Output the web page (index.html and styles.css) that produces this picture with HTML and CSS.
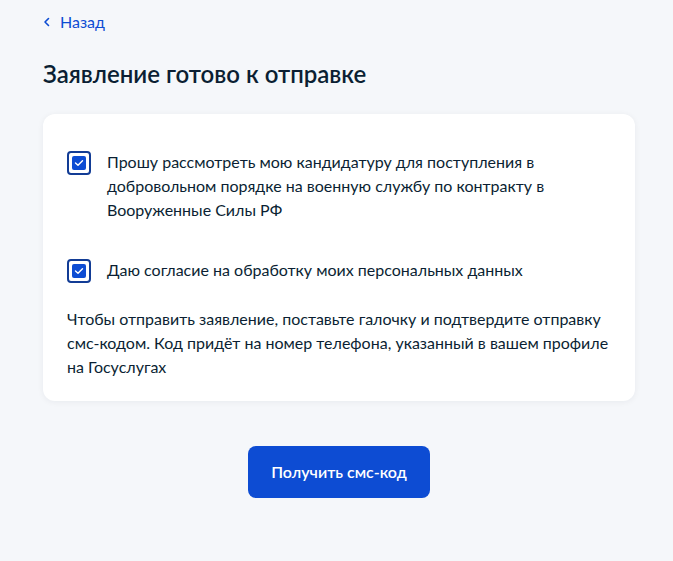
FILE: index.html
```html
<!DOCTYPE html>
<html lang="ru">
<head>
<meta charset="utf-8">
<title>Заявление готово к отправке</title>
<link rel="stylesheet" href="styles.css">
</head>
<body>
<main class="page">
  <a class="back" href="#">
    <svg class="back-icon" width="8" height="10" viewBox="0 0 8 10" aria-hidden="true">
      <path d="M5.5 1.5 L2 5 L5.5 8.5" fill="none" stroke="currentColor" stroke-width="1.6" stroke-linecap="round" stroke-linejoin="round"/>
    </svg>
    <span>Назад</span>
  </a>

  <h1 class="title">Заявление готово к отправке</h1>

  <section class="card">
    <label class="check">
      <span class="box"><span class="box-fill">
        <svg width="10" height="8" viewBox="0 0 10 8" aria-hidden="true"><path d="M1.5 4 L4 6.3 L8.5 1.7" fill="none" stroke="#fff" stroke-width="1.4" stroke-linecap="round" stroke-linejoin="round"/></svg>
      </span></span>
      <span class="check-text">Прошу рассмотреть мою кандидатуру для поступления в добровольном порядке на военную службу по контракту в Вооруженные Силы РФ</span>
    </label>

    <label class="check">
      <span class="box"><span class="box-fill">
        <svg width="10" height="8" viewBox="0 0 10 8" aria-hidden="true"><path d="M1.5 4 L4 6.3 L8.5 1.7" fill="none" stroke="#fff" stroke-width="1.4" stroke-linecap="round" stroke-linejoin="round"/></svg>
      </span></span>
      <span class="check-text">Даю согласие на обработку моих персональных данных</span>
    </label>

    <p class="note">Чтобы отправить заявление, поставьте галочку и подтвердите отправку смс-кодом. Код придёт на номер телефона, указанный в вашем профиле на Госуслугах</p>
  </section>

  <div class="actions">
    <button class="btn" type="button">Получить смс-код</button>
  </div>
</main>
</body>
</html>
```

FILE: styles.css
```css
* { box-sizing: border-box; }

html, body {
  margin: 0;
  background: #f5f7fa;
}

body {
  font-family: Lato, "Noto Sans", "Liberation Sans", sans-serif;
  color: #0b1f33;
  font-size: 16px;
  line-height: 24px;
}

.page {
  width: 592px;
  margin-left: 43px;
  padding-top: 9px;
  padding-bottom: 40px;
}

.back {
  display: inline-flex;
  align-items: center;
  gap: 9px;
  color: #0d4cd3;
  text-decoration: none;
  font-size: 16px;
  line-height: 24px;
}

.back-icon { display: block; margin-top: 1px; }

.title {
  margin: 24px 0 24px;
  font-size: 24px;
  line-height: 32px;
  font-weight: 600;
  letter-spacing: 0;
}

.card {
  background: #fff;
  border-radius: 12px;
  box-shadow: 0 1px 6px rgba(11, 31, 51, 0.06);
  padding: 36px 24px 22px;
  display: flex;
  flex-direction: column;
  gap: 36px;
}

.check {
  display: flex;
  align-items: flex-start;
  gap: 16px;
}

.check + .note { margin-top: -12px; }

.box {
  flex: none;
  width: 24px;
  height: 24px;
  margin-top: 1px;
  border: 2px solid #123c95;
  border-radius: 4px;
  background: #fff;
  padding: 3px;
}

.box-fill {
  display: flex;
  align-items: center;
  justify-content: center;
  width: 100%;
  height: 100%;
  background: #0d4cd3;
  border-radius: 2px;
}

.box-fill svg { display: block; }

.check-text {
  flex: 1;
}

.note {
  margin: 0;
}

.actions {
  display: flex;
  justify-content: center;
  margin-top: 45px;
}

.btn {
  width: 182px;
  height: 52px;
  border: 0;
  border-radius: 8px;
  background: #0d4cd3;
  color: #fff;
  font-family: inherit;
  font-size: 16px;
  font-weight: 600;
  cursor: pointer;
}
```
